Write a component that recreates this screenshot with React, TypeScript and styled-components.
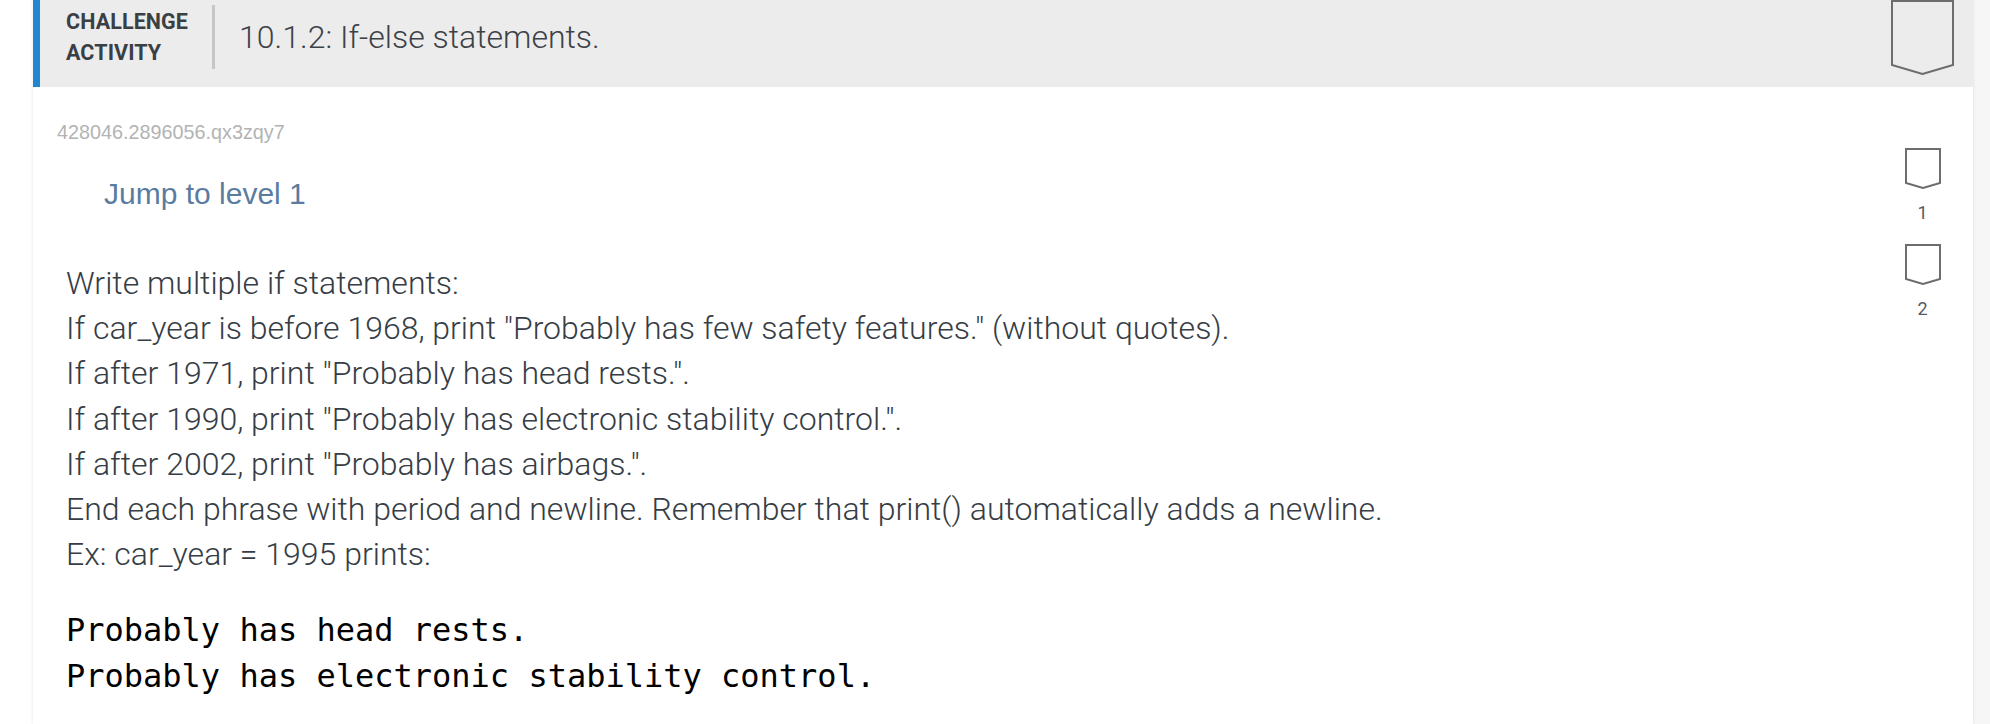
import React from 'react';
import styled, { createGlobalStyle } from 'styled-components';

const GlobalStyle = createGlobalStyle`
  html, body {
    margin: 0;
    padding: 0;
    background: #ffffff;
    overflow: hidden;
  }
  * {
    box-sizing: border-box;
  }
`;

const Page = styled.div`
  width: 1990px;
  height: 724px;
  padding-left: 33px;
  padding-right: 17px;
  background: linear-gradient(90deg, #ffffff 0, #ffffff 1973px, #f6f6f6 1973px);
`;

const Card = styled.section`
  width: 1940px;
  min-height: 724px;
  background: #ffffff;
  box-shadow: 0 0 3px rgba(0, 0, 0, 0.12);
`;

/* Header */
const Header = styled.header`
  display: flex;
  align-items: flex-start;
  height: 87px;
  padding-right: 19px;
  background: #ececec;
  border-left: 7px solid #1f86d1;
`;

const HeaderMain = styled.div`
  display: flex;
  align-items: center;
  height: 64px;
  margin-top: 5px;
  padding-left: 26px;
  gap: 24px;
`;

const Label = styled.div`
  font-family: Roboto, 'Liberation Sans', sans-serif;
  font-weight: 700;
  font-size: 21.5px;
  line-height: 31px;
  color: #3a3f45;
  text-transform: uppercase;
  letter-spacing: 0.1px;
`;

const Divider = styled.div`
  width: 3px;
  align-self: stretch;
  background: #c6c6c6;
`;

const Title = styled.h1`
  margin: 0;
  font-family: Roboto, 'Liberation Sans', sans-serif;
  font-weight: 300;
  font-size: 32px;
  line-height: 40px;
  color: #3d4248;
`;

const HeaderBadge = styled.div`
  margin-left: auto;
  display: flex;
`;

/* Body */
const Body = styled.div`
  display: grid;
  grid-template-columns: 1fr 35px;
  column-gap: 24px;
  padding: 33px 33px 0 24px;
`;

const Main = styled.div`
  display: flex;
  flex-direction: column;
`;

const ActivityId = styled.div`
  font-family: 'Liberation Sans', Arial, sans-serif;
  font-size: 19.8px;
  line-height: 24px;
  color: #b3b3b3;
`;

const JumpLink = styled.a`
  margin-top: 32px;
  margin-left: 47px;
  font-family: 'Liberation Sans', Arial, sans-serif;
  font-size: 30px;
  line-height: 36px;
  color: #5a7ca1;
  text-decoration: none;
  cursor: pointer;
`;

const Instructions = styled.div`
  margin-top: 49px;
  margin-left: 9px;
  font-family: Roboto, 'Liberation Sans', sans-serif;
  font-weight: 300;
  font-size: 32px;
  line-height: 45.2px;
  color: #363d45;
`;

const Line = styled.div``;

const Output = styled.pre`
  margin: 31px 0 0 9px;
  font-family: 'DejaVu Sans Mono', 'Liberation Mono', monospace;
  font-size: 32px;
  line-height: 45.7px;
  color: #000000;
`;

const Levels = styled.ul`
  list-style: none;
  margin: 28px 0 0;
  padding: 0;
  display: flex;
  flex-direction: column;
  gap: 21px;
`;

const Level = styled.li`
  display: flex;
  flex-direction: column;
  align-items: center;
  gap: 14px;
`;

const LevelNumber = styled.span`
  font-family: Roboto, 'Liberation Sans', sans-serif;
  font-weight: 400;
  font-size: 18px;
  line-height: 20px;
  color: #555a5f;
`;

const Bookmark: React.FC<{ width: number; height: number }> = ({ width, height }) => {
  const side = Math.round(height * 0.865);
  return (
    <svg width={width} height={height} viewBox={`0 0 ${width} ${height}`} fill="none">
      <path
        d={`M1 1 H${width - 1} V${side} L${width / 2} ${height - 1} L1 ${side} Z`}
        stroke="#6d6d6d"
        strokeWidth={2}
      />
    </svg>
  );
};

const lines = [
  'Write multiple if statements:',
  'If car_year is before 1968, print "Probably has few safety features." (without quotes).',
  'If after 1971, print "Probably has head rests.".',
  'If after 1990, print "Probably has electronic stability control.".',
  'If after 2002, print "Probably has airbags.".',
  'End each phrase with period and newline. Remember that print() automatically adds a newline.',
  'Ex: car_year = 1995 prints:',
];

export default function App() {
  return (
    <>
      <GlobalStyle />
      <Page>
        <Card>
          <Header>
            <HeaderMain>
              <Label>
                Challenge
                <br />
                Activity
              </Label>
              <Divider />
              <Title>10.1.2: If-else statements.</Title>
            </HeaderMain>
            <HeaderBadge>
              <Bookmark width={63} height={75} />
            </HeaderBadge>
          </Header>
          <Body>
            <Main>
              <ActivityId>428046.2896056.qx3zqy7</ActivityId>
              <JumpLink>Jump to level 1</JumpLink>
              <Instructions>
                {lines.map((l) => (
                  <Line key={l}>{l}</Line>
                ))}
              </Instructions>
              <Output>{'Probably has head rests.\nProbably has electronic stability control.'}</Output>
            </Main>
            <Levels>
              {[1, 2].map((n) => (
                <Level key={n}>
                  <Bookmark width={36} height={41} />
                  <LevelNumber>{n}</LevelNumber>
                </Level>
              ))}
            </Levels>
          </Body>
        </Card>
      </Page>
    </>
  );
}
